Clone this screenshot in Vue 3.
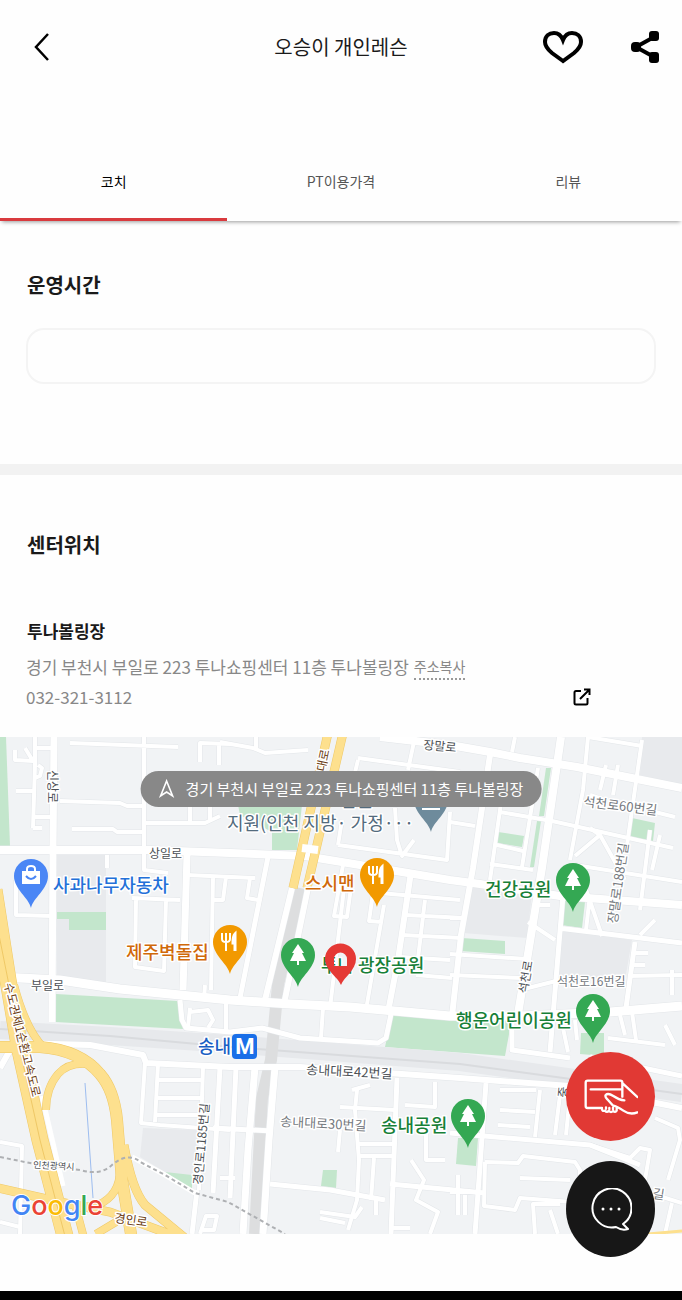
<script setup>
import { ref } from 'vue'

const tabs = ['코치', 'PT이용가격', '리뷰']
const active = ref(0)
const address = '경기 부천시 부일로 223 투나쇼핑센터 11층 투나볼링장'

const blocks = [
  'M57 855H106V983H57z',
  'M642 737H682V785L640 775z',
  'M467 885L532 893L527 938L463 933z',
  'M560 930L632 940L625 980L553 975z',
  'M143 1128L198 1130L194 1178L165 1172L140 1157z',
]

const parks = [
  'M0 737H6L10 846H0z',
  'M57 912H106V930H69V919H57z',
  'M238 805H302L297 850H272V832L240 815z',
  'M56 994L178 1001L183 1029L55 1022z',
  'M546 768H551L544 816H539z',
  'M537 821H541L534 867H530z',
  'M498 832L524 836L522 847L497 843z',
  'M632 818L655 823L653 841L630 837z',
  'M565 900L585 902L582 928L561 925z',
  'M462 938L505 941V954L460 951z',
  'M392 1014L512 1018L505 1056L385 1047z',
  'M581 1033H604V1056L580 1054z',
  'M458 1138H478L476 1166L456 1164z',
  'M323 1170H337L336 1188L321 1186z',
  'M165 1172L192 1175V1190z',
]

const roads = [
  { w: 7, d: 'M54 737L53 850L52 1022' },
  { w: 4, d: 'M35 737L35 765L33 828M33 748H54M15 750V760L33 761L25 748M38 765L42 768L40 776L35 778M16 791H34M34 817H52M33 828H42' },
  { w: 4, d: 'M70 743L178 747M144 737V870L168 873M60 801L120 803L127 806H144M72 829H113L117 832H144M146 823H205L220 816M190 806V823' },
  { w: 4, d: 'M200 762V743L230 744M219 743V765M220 742L253 748L265 753L308 750M256 737V748M210 806V822' },
  { w: 8, d: 'M0 850H150L230 853L305 856L360 865L450 880L480 884L560 896L682 905' },
  { w: 7, d: 'M187 855L183 990' },
  { w: 4, d: 'M187 875L255 878M213 877L211 990M226 877L223 900H213M250 878L247 898L258 900' },
  { w: 4, d: 'M180 900L132 898M136 899L135 967L164 971L166 900M16 880V915L52 916M107 855V868' },
  { w: 9, d: 'M0 977L60 980L120 989L230 1000L290 1004L350 1007L450 1016L520 1016L610 1012L682 1006' },
  { w: 5, d: 'M268 857L240 998' },
  { w: 6, d: 'M292 888L264 1004M308 888L284 1004' },
  { w: 4, d: 'M343 865L334 916L347 917L352 880M376 872L369 921L382 922M384 905L366 1010M345 880L330 1008' },
  { w: 6, d: 'M411 872L398 960L388 1012' },
  { w: 4, d: 'M380 893L460 900M405 915L465 918M402 935L462 938M400 957L450 960M425 900L416 975M416 975L452 978' },
  { w: 4, d: 'M358 758L460 772M358 760L352 785M338 845L447 860L450 812M395 808L397 840L402 856L414 840M415 737L408 770M338 845L342 820' },
  { w: 8, d: 'M380 737L450 745L490 752L520 758L577 767L682 788' },
  { w: 8, d: 'M561 737L542 868L527 960L518 1014' },
  { w: 6, d: 'M490 755L473 868L461 935L452 1016' },
  { w: 4, d: 'M515 737L512 752M588 737L583 790L570 860M588 737L642 746M606 765L600 790M618 765L613 795M590 795L605 800' },
  { w: 4, d: 'M642 740L627 845M538 768L522 867M500 812L552 821L673 848M450 822L475 826M505 775L490 880M490 864L533 870M497 845L523 851' },
  { w: 4, d: 'M575 856L600 835L625 880M600 835L590 828M575 865L682 882M580 872L602 936M590 895L586 930M650 830L640 910M655 812L675 817M660 835L652 870' },
  { w: 5, d: 'M563 895L550 1052M558 928L682 943M635 942L626 1008' },
  { w: 4, d: 'M528 922L555 940M450 918H463M450 954L527 959M450 975L522 978M628 976L682 975M520 990L560 980M535 905H550M640 935L655 920M635 953H648M633 965H645M672 970V995' },
  { w: 5, d: 'M180 1000L182 1020L186 1028L230 1032L262 1028L300 1038L378 1043L386 1038L391 1014' },
  { w: 4, d: 'M190 1008L188 1028M205 985L204 1000M190 1012L208 1010L213 1020L208 1028M226 1000V1030M323 1008L321 1038' },
  { w: 6, d: 'M0 1068L14 1043L90 1045L143 1055L146 1063L230 1067L300 1067L460 1078L570 1086L682 1108' },
  { w: 4, d: 'M145 1063L141 1123L160 1125L230 1130M158 1064L155 1122M203 1067L199 1190M158 1080H203M158 1098H203M156 1115H200' },
  { w: 5, d: 'M220 1067L213 1193M236 1067L230 1198M197 1190L192 1234M213 1128L272 1131' },
  { w: 7, d: 'M255 1067L248 1150L243 1234M275 1067L269 1140L263 1234' },
  { w: 4, d: 'M0 1142L22 1146L20 1234M0 1222L20 1227M200 1234L206 1216H217L214 1230H203M220 1178H235' },
  { w: 5, d: 'M270 1184L330 1190L385 1200M397 1078L391 1234M390 1184L485 1193M450 1133L590 1145L640 1165' },
  { w: 4, d: 'M340 1107L395 1110M352 1090L370 1085M357 1090L355 1110L359 1160L357 1200L348 1230M359 1144H392M359 1156H392M374 1158L371 1200M340 1130L338 1152' },
  { w: 4, d: 'M411 1160L424 1180L420 1190L416 1200L438 1212L430 1234M320 1212L355 1217L362 1207M320 1218L345 1223M426 1130V1160H445M376 1200V1215M392 1228H410M405 1105L435 1107V1082' },
  { w: 5, d: 'M486 1083L475 1234M512 1016V1050L570 1058M590 1057L682 1076' },
  { w: 4, d: 'M485 1162L518 1163L523 1156L575 1162L580 1170V1202M485 1162L484 1206L515 1210L520 1198L572 1202M520 1178L570 1180M540 1090L535 1137M500 1110L535 1112M498 1125L530 1127M560 1095L555 1135M570 1095L566 1135M500 1090H536' },
  { w: 4, d: 'M450 1192L480 1192M535 1234L533 1204H560M550 1210L558 1234M655 1118L678 1128L680 1140L668 1180M590 1145L630 1158L640 1148L650 1150L645 1180M640 1190L682 1203M672 1203L665 1234M458 1175V1215M465 1195V1215' },
  { w: 4, d: 'M620 1015L625 1035M632 1012L636 1040M608 1038L665 1045M665 1025L675 1045M563 1028L568 1052M575 1020L577 1040' },
]

const highways = [
  { w: 16, d: 'M-6 890L8 980L20 1050L40 1140L66 1240' },
  { w: 11, d: 'M-2 1047H40Q80 1050 100 1074Q114 1090 117 1120L122 1180L132 1240' },
  { w: 7, d: 'M95 1065Q70 1060 58 1074Q46 1088 46 1110M14 985Q26 1030 44 1048' },
  { w: 8, d: 'M124 1145Q132 1190 145 1205L185 1238M-2 1188L60 1202L110 1212L180 1238' },
  { w: 7, d: 'M120 1170Q120 1195 98 1205L76 1208L84 1238M96 1234L116 1222' },
  { w: 8, d: 'M328 733L293 888M343 733L307 888' },
]

const labels = [
  { t: '장말로', x: 423, y: 749, s: 12, c: 'road', r: 5 },
  { t: '신상로', x: 48, y: 770, s: 12, c: 'road', r: 90 },
  { t: '대로', x: 325, y: 772, s: 12, c: 'brown', r: -78 },
  { t: '법원', x: 340, y: 807, s: 18, c: 'civic' },
  { t: '지원(인천 지방· 가정···', x: 227, y: 830, s: 18, c: 'civic' },
  { t: '상일로', x: 149, y: 858, s: 12, c: 'road' },
  { t: '석천로60번길', x: 583, y: 806, s: 13, c: 'lane', r: 7 },
  { t: '장말로188번길', x: 617, y: 924, s: 13, c: 'lane', r: -82 },
  { t: '사과나무자동차', x: 53, y: 892, s: 18, c: 'shop' },
  { t: '스시맨', x: 305, y: 890, s: 18, c: 'food' },
  { t: '건강공원', x: 485, y: 896, s: 18, c: 'park' },
  { t: '제주벽돌집', x: 126, y: 959, s: 18, c: 'food' },
  { t: '투나', x: 321, y: 972, s: 18, c: 'park' },
  { t: '광장공원', x: 358, y: 972, s: 18, c: 'park' },
  { t: '석천로', x: 527, y: 994, s: 12, c: 'road', r: -80 },
  { t: '석천로16번길', x: 557, y: 986, s: 12, c: 'lane' },
  { t: '부일로', x: 31, y: 990, s: 12, c: 'road' },
  { t: '수도권제1순환고속도로', x: 4, y: 984, s: 12, c: 'brown', r: 76 },
  { t: '행운어린이공원', x: 456, y: 1027, s: 18, c: 'park' },
  { t: '송내', x: 198, y: 1053, s: 18, c: 'metro' },
  { t: '송내대로42번길', x: 306, y: 1074, s: 13, c: 'road', r: 3 },
  { t: '송내대로30번길', x: 280, y: 1126, s: 13, c: 'lane', r: 3 },
  { t: '송내공원', x: 381, y: 1132, s: 18, c: 'park' },
  { t: '경인로1185번길', x: 202, y: 1185, s: 12, c: 'road', r: -85 },
  { t: '인천광역시', x: 33, y: 1168, s: 9, c: 'road', r: 3 },
  { t: '경인로', x: 114, y: 1222, s: 12, c: 'brown', r: 8 },
  { t: '중', x: 567, y: 1098, s: 12, c: 'road', r: -85 },
  { t: '길', x: 652, y: 1198, s: 13, c: 'lane', r: 8 },
]

const pins = [
  { x: 31, y: 876, k: 'bag', f: '#4a86f5' },
  { x: 431, y: 800, k: 'court', f: '#6e8b9c' },
  { x: 377, y: 875, k: 'food', f: '#f29900' },
  { x: 230, y: 942, k: 'food', f: '#f29900' },
  { x: 298, y: 955, k: 'tree', f: '#34a853' },
  { x: 573, y: 880, k: 'tree', f: '#34a853' },
  { x: 593, y: 1011, k: 'tree', f: '#34a853' },
  { x: 468, y: 1116, k: 'tree', f: '#34a853' },
]
</script>

<template>
  <div class="page">
    <header class="bar">
      <button class="icon back" type="button" aria-label="뒤로">
        <svg width="18" height="30" viewBox="0 0 18 30"><path d="M16 2L4 15L16 28" fill="none" stroke="#000" stroke-width="2.500" /></svg>
      </button>
      <h1>오승이 개인레슨</h1>
      <div class="actions">
        <button class="icon" type="button" aria-label="찜하기">
          <svg width="42" height="34" viewBox="0 0 42 34"><path d="M21 31L10 23C4 18 3 15 3 12C3 6 7 3 12 3C16 3 19 5 21 10C23 5 26 3 30 3C35 3 39 6 39 12C39 15 38 18 32 23z" fill="none" stroke="#000" stroke-width="4" /></svg>
        </button>
        <button class="icon" type="button" aria-label="공유">
          <svg width="30" height="32" viewBox="0 0 30 32"><path d="M24 6L6 16L24 26" fill="none" stroke="#000" stroke-width="4" /><rect x="1" y="11" width="10" height="10" rx="4" /><rect x="19" y="0" width="10" height="10" rx="3" /><rect x="19" y="21" width="10" height="11" rx="3" /></svg>
        </button>
      </div>
    </header>

    <nav class="tabs" role="tablist">
      <button v-for="(t, i) in tabs" :key="t" type="button" role="tab" :aria-selected="active === i" :class="{ on: active === i }" @click="active = i">{{ t }}</button>
    </nav>

    <section class="hours">
      <h2>운영시간</h2>
      <div class="box"></div>
    </section>

    <section class="place">
      <h2>센터위치</h2>
      <h3>투나볼링장</h3>
      <p class="addr"><span>{{ address }}</span><button class="copy" type="button">주소복사</button></p>
      <div class="phone">
        <span>032-321-3112</span>
        <a href="#map" aria-label="지도 열기">
          <svg width="18" height="18" viewBox="0 0 18 18"><path d="M8 3H3Q1.500 3 1.500 4.500V15Q1.500 16.500 3 16.500H13Q14.500 16.500 14.500 15V10M11 1.500H16.500V7M16 2L7 11" fill="none" stroke="#000" stroke-width="2" /></svg>
        </a>
      </div>
    </section>

    <div id="map" class="map">
      <svg class="canvas" viewBox="0 737 682 497" role="img" aria-label="지도">
        <rect x="0" y="737" width="682" height="497" fill="#f1f3f5" />
        <path v-for="d in blocks" :key="d" :d="d" fill="#e8eaed" />
        <path v-for="d in parks" :key="d" :d="d" fill="#c3e6cc" />
        <path d="M0 1030L110 1036L230 1044L460 1062L682 1093" fill="none" stroke="#e7e9ec" stroke-width="18" />
        <path d="M0 1029L110 1036L230 1047L460 1064L682 1094" fill="none" stroke="#d9dbde" stroke-width="2" />
        <path d="M300 888L278 985L271 1060L262 1098L255 1234" fill="none" stroke="#dddedf" stroke-width="12" />
        <g fill="none" stroke="#e3e6e9" stroke-linejoin="round">
          <path v-for="r in roads" :key="r.d" :d="r.d" :stroke-width="r.w + 1" />
        </g>
        <g fill="none" stroke="#fff" stroke-linejoin="round">
          <path v-for="r in roads" :key="r.d" :d="r.d" :stroke-width="r.w" />
        </g>
        <path d="M42 1096L63 1186" stroke="#fff" stroke-width="5" />
        <g fill="none" stroke="#efc866">
          <path v-for="r in highways" :key="r.d" :d="r.d" :stroke-width="r.w + 1" />
        </g>
        <g fill="none" stroke="#fde08e">
          <path v-for="r in highways" :key="r.d" :d="r.d" :stroke-width="r.w" />
        </g>
        <path d="M-4 920L8 980L20 1050L40 1140L66 1240" fill="none" stroke="#efc866" />
        <path d="M302 848L318 850" stroke="#fff" stroke-width="8" />
        <path d="M648 1234L682 1231" stroke="#fde08e" stroke-width="3" />
        <path d="M85 1083L93 1198" stroke="#9dbdf0" stroke-width="1" />
        <path d="M132 1157L165 1175L195 1193" fill="none" stroke="#fff" stroke-width="5" />
        <path d="M0 1157L35 1164L80 1170Q100 1176 112 1165Q128 1151 142 1163L165 1175L195 1193L228 1202L285 1234" fill="none" stroke="#aeb0b3" stroke-width="2" stroke-dasharray="4 3" />

        <g v-for="p in pins" :key="p.x" :transform="`translate(${p.x} ${p.y})`">
          <path d="M0 32C-2 22 -17 13 -17 0A17 17 0 0 1 17 0C17 13 2 22 0 32z" :fill="p.f" />
          <path v-if="p.k === 'tree'" d="M0 -11L6 -2H4L8 6H1V10H-1V6H-8L-4 -2H-6z" fill="#fff" />
          <g v-else-if="p.k === 'food'" fill="none" stroke="#fff" stroke-width="2">
            <path d="M-8 -9V-3Q-8 0 -4 0Q0 0 0 -3V-9M-4 -9V9" /><path d="M5 9V-8Q3 -6 3 1H5" stroke-width="3" />
          </g>
          <g v-else-if="p.k === 'bag'">
            <path d="M-9 -5H9V8H-9z" fill="#fff" /><path d="M-4 -4V-7Q-4 -10 0 -10Q4 -10 4 -7V-4" fill="none" stroke="#fff" stroke-width="2" /><path d="M-5 0Q0 6 5 0" fill="none" stroke="#4a86f5" stroke-width="2" />
          </g>
          <path v-else d="M-9 9H9M-6 5V0M0 5V0M6 5V0" stroke="#fff" stroke-width="2" />
        </g>

        <rect x="232" y="1034" width="25" height="25" rx="4" fill="#1a6fe8" />
        <text x="245" y="1054" class="m">M</text>

        <text v-for="l in labels" :key="l.t" :class="['label', l.c]" :x="l.x" :y="l.y" :font-size="l.s" :transform="l.r ? `rotate(${l.r} ${l.x} ${l.y})` : undefined">{{ l.t }}</text>

        <path fill-rule="evenodd" d="M341 985C338 977 325 970 325 959A15.500 15.500 0 0 1 356 959C356 970 344 977 341 985zM334 959V966H347V959A6.500 6.500 0 0 0 334 959z" fill="#e53935" />

        <text x="11" y="1215" class="google"><tspan fill="#4285f4">G</tspan><tspan fill="#ea4335">o</tspan><tspan fill="#fbbc05">o</tspan><tspan fill="#4285f4">g</tspan><tspan fill="#34a853">l</tspan><tspan fill="#ea4335">e</tspan></text>
      </svg>
      <div class="pill">
        <svg width="16" height="20" viewBox="0 0 16 20"><path d="M8 2L14 17L8 13L2 17z" fill="none" stroke="#fff" stroke-width="1.600" /></svg>
        <span>{{ address }}</span>
      </div>
    </div>

    <div class="system"></div>

    <div class="fabs">
      <button class="pay" type="button" aria-label="결제">
        <svg width="54" height="37" viewBox="0 0 162 111" fill="none" stroke="#fff" stroke-width="7" stroke-linecap="round" stroke-linejoin="round">
          <path d="M54 90H10Q5 90 5 84V14Q5 8 11 8H109Q115 8 115 14V56M20 34H113M116 16L160 57" />
          <path d="M121 67Q105 66 88 54Q72 44 65 51Q62 56 70 64L86 82Q100 85 118 98Q138 112 160 103M98 88V98Q94 104 87 99Q81 105 75 99Q68 104 63 98Q54 101 54 92M66 88V92M76 90V94M87 89V94" />
        </svg>
      </button>
      <button class="chat" type="button" aria-label="채팅">
        <svg width="42" height="43" viewBox="0 0 42 43"><path d="M33 36L38 41Q32 43 26 39A19.500 19.500 0 1 1 33 36z" fill="none" stroke="#fff" stroke-width="2" stroke-linejoin="round" /><circle cx="13" cy="21" r="1.500" fill="#fff" /><circle cx="21" cy="21" r="1.500" fill="#fff" /><circle cx="29" cy="21" r="1.500" fill="#fff" /></svg>
      </button>
    </div>
  </div>
</template>

<style>
body {
  margin: 0;
  background: #fff;
}
</style>

<style scoped>
.page {
  position: relative;
  display: flex;
  flex-direction: column;
  min-height: 100vh;
  overflow: hidden;
  background: #fefefe;
  color: #1a1a1a;
  font-family: "Noto Sans CJK KR", "Noto Sans", sans-serif;
}
button {
  padding: 0;
  border: 0;
  background: none;
  color: inherit;
  font: inherit;
  cursor: pointer;
}
svg {
  display: block;
}
h1, h2, h3, p {
  margin: 0;
}
.bar {
  display: grid;
  grid-template-columns: 1fr auto 1fr;
  align-items: center;
  height: 94px;
  padding: 0 22px 0 32px;
}
.back {
  justify-self: start;
}
h1 {
  margin-right: 10px;
  font-size: 20px;
  font-weight: 400;
  line-height: 30px;
}
.actions {
  display: flex;
  align-items: center;
  justify-self: end;
  gap: 46px;
}
.tabs {
  display: grid;
  grid-template-columns: repeat(3, 1fr);
  margin-top: 49px;
  box-shadow: 0 3px 4px -2px rgba(0, 0, 0, 0.4);
}
.tabs button {
  height: 78px;
  border-bottom: 3px solid transparent;
  color: #555;
  font-size: 14px;
  line-height: 20px;
}
.tabs .on {
  border-bottom-color: #d93a3e;
  color: #000;
}
.hours {
  padding: 49px 26px 80px;
  border-bottom: 11px solid #f2f2f2;
}
h2 {
  padding-left: 1px;
  font-size: 20px;
  font-weight: 700;
  line-height: 30px;
}
.box {
  height: 52px;
  margin-top: 28px;
  border: 2px solid #f4f4f4;
  border-radius: 18px;
}
.place {
  padding: 55px 27px 25px 26px;
}
h3 {
  margin-top: 58px;
  padding-left: 1px;
  font-size: 17px;
  font-weight: 700;
  line-height: 26px;
}
.addr, .phone {
  display: flex;
  align-items: center;
  color: #888;
  font-size: 17px;
  line-height: 30px;
}
.addr {
  gap: 5px;
  margin-top: 8px;
}
.copy {
  border-bottom: 2px dotted #999;
  font-size: 14px;
  line-height: 24px;
}
.phone {
  justify-content: space-between;
  padding-right: 64px;
}
.map {
  position: relative;
}
.canvas {
  width: 100%;
  height: auto;
}
.label {
  paint-order: stroke;
  stroke: #fff;
  stroke-width: 3px;
  stroke-linejoin: round;
}
.road { fill: #4b4f54; }
.lane { fill: #75797e; }
.brown { fill: #6b3c12; }
.civic { fill: #536b7d; }
.shop { fill: #2370d8; font-weight: 500; }
.food { fill: #d0690a; font-weight: 500; }
.park { fill: #178038; font-weight: 500; }
.metro { fill: #1a5fc4; font-weight: 500; }
.m {
  fill: #fff;
  font: 700 22px Roboto, sans-serif;
  text-anchor: middle;
}
.google {
  font: 500 27px Inter, sans-serif;
  paint-order: stroke;
  stroke: #fff;
  stroke-width: 2px;
}
.pill {
  position: absolute;
  top: 34px;
  left: 50%;
  display: flex;
  align-items: center;
  gap: 11px;
  box-sizing: border-box;
  height: 36px;
  padding: 0 18px;
  border-radius: 18px;
  background: #888;
  color: #fff;
  font-size: 15px;
  line-height: 22px;
  white-space: nowrap;
  transform: translateX(-50%);
}
.system {
  height: 9px;
  margin-top: auto;
  background: #000;
}
.fabs {
  position: absolute;
  right: 27px;
  bottom: 43px;
  display: flex;
  flex-direction: column;
  gap: 20px;
}
.fabs button {
  display: grid;
  place-items: center;
  width: 89px;
  border-radius: 50%;
}
.pay {
  height: 89px;
  background: #e13934;
}
.chat {
  height: 96px;
  background: #171717;
}
</style>
